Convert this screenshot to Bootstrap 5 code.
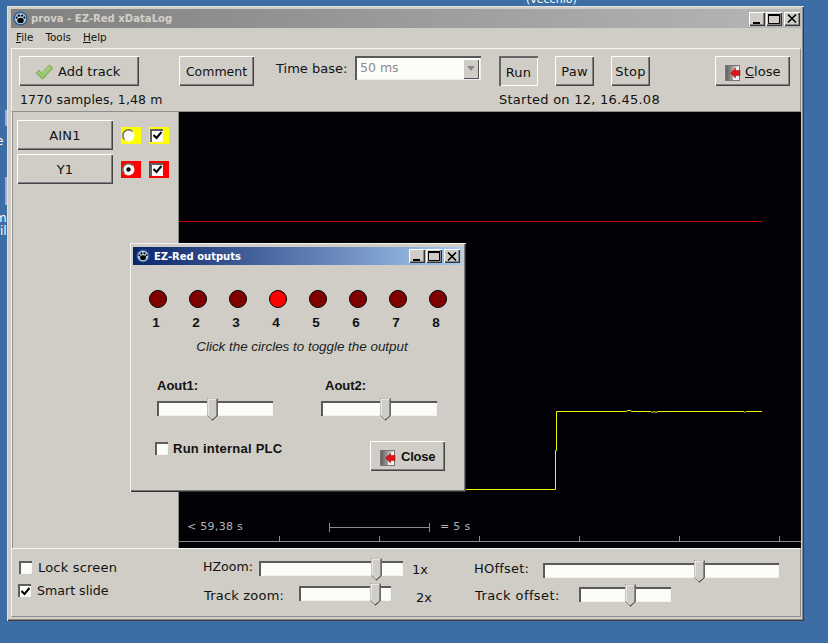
<!DOCTYPE html>
<html lang="en">
<head>
<meta charset="utf-8">
<title>prova - EZ-Red xDataLog</title>
<link href="https://cdn.jsdelivr.net/npm/bootstrap@5.3.0/dist/css/bootstrap.min.css" rel="stylesheet">
<style>
html,body{margin:0;height:100%;overflow:hidden}
body{background:#3c6ea5;font-family:"DejaVu Sans",sans-serif;font-size:13px;color:#111}
.desk{position:relative;width:828px;height:643px;overflow:hidden;background:#3c6ea5}
.stray{position:absolute;color:#fff;font-size:12px;line-height:12px;white-space:nowrap}
.sliver{position:absolute;left:5px;width:2px;background:#a9a6d8}
.surface{background-color:#cfcdc5;background-image:repeating-conic-gradient(#d3d1c9 0 25%,#cbc9c1 0 50%);background-size:2px 2px}
.win{position:absolute;left:7px;top:6px;width:797px;height:615px;padding:3px 3px 3px 4px;box-shadow:inset 1px 1px 0 #e4e2dc,inset -1px -1px 0 #3c3c3c,inset -2px -2px 0 #8a8a8a}
.titlebar{height:19px;padding-left:2px;background:linear-gradient(90deg,#808080,#b6b6b6);color:#d4d0c8;font-weight:700;font-size:10.1px;white-space:nowrap}
.title-name{margin-left:3px}
.capbtns{margin-left:auto;margin-right:1px;gap:1px}
.capbtn{width:16px;height:14px;box-shadow:inset 1px 1px 0 #fff,inset -1px -1px 0 #333,inset -2px -2px 0 #888;display:flex;align-items:center;justify-content:center}
.capbtn+.capbtn+.capbtn{margin-left:1px}
.menubar{height:20px;font-size:10.4px;padding-left:5px;gap:12px;color:#111}
.toolbar{height:64px;width:790px;border-top:1px solid #f5f5f2;border-left:1px solid #f5f5f2;border-bottom:1px solid #8e8e8e;border-right:1px solid #8e8e8e;padding:7px 0 0 7px}
.row-a{height:30px}
.row-b{height:19px;margin-top:4px;white-space:nowrap}
.wbtn{height:30px;padding:2px 0 0;border:0;border-radius:0;font-size:13px;color:#111;font-family:inherit;letter-spacing:.25px;box-shadow:inset 1px 1px 0 #fff,inset -1px -1px 0 #444,inset -2px -2px 0 #808080;display:flex;align-items:center;justify-content:center;background:transparent;flex:none}
.wbtn.pressed{box-shadow:inset 2px 2px 0 #666,inset -1px -1px 0 #fff;padding-top:4px}
.w-add{width:120px;gap:5px;justify-content:flex-start;padding-left:17px;letter-spacing:0}
.w-cmt{width:75px;margin-left:40px;font-size:12.5px;letter-spacing:0}
.tb-lbl{margin-left:22px;width:79px;margin-top:-4px;white-space:nowrap;letter-spacing:0}
.combo{width:126px;height:24px;display:flex;align-items:center;justify-content:space-between;background:#fcfdf9;padding:2px 1px 1px 5px;box-shadow:inset 2px 2px 0 #5a5a5a,inset -1px -1px 0 #eee;color:#8b8b8b;font-size:12.5px}
.combo-arrow{width:16px;height:20px;margin-right:1px;display:flex;align-items:center;justify-content:center;box-shadow:inset 1px 1px 0 #fff,inset -1px -1px 0 #555}
.w-run{width:39px;margin-left:18px}
.w-paw{width:39px;margin-left:17px}
.w-stop{width:39px;margin-left:17px}
.w-close{width:75px;margin-left:65px;gap:4px;justify-content:flex-start;padding-left:10px;letter-spacing:0}
.status-l{width:480px;letter-spacing:.15px;padding-left:1px;font-size:12.5px;line-height:19px}
.status-r{letter-spacing:.25px}
.middle{height:436px;width:790px}
.side{width:168px;flex:none;border-left:1px solid #f5f5f2;border-right:1px solid #8a8a8a;box-shadow:inset 1px 0 0 #8e8e8e;padding:8px 0 0 5px}
.tr{margin-bottom:4px}
.w-track{width:96px}
.swatch{width:20px;height:17px;display:flex;align-items:center;justify-content:flex-start;padding-left:1px}
.sw-radio{margin-left:8px}
.sw-check{margin-left:8px}
.sw-y{background:#ffff00}
.sw-r{background:#ff0000}
.plot{width:622px;height:436px;background:#020206;flex:none}
.plot svg{display:block}
.plot text{font-family:"DejaVu Sans",sans-serif;font-size:11px;fill:#b4b4b4;letter-spacing:.3px}
.chk{width:13px;height:13px;background:#fcfdf9;box-shadow:inset 2px 2px 0 #5e5e5e,inset -1px -1px 0 #f4f4f4;display:flex;align-items:center;justify-content:center;flex:none;padding:1px 0 0 1px}
.rad{width:13px;height:13px;flex:none}
.bottom{height:69px;width:790px;border-top:1px solid #f5f5f2;border-left:1px solid #f5f5f2;border-bottom:1px solid #8e8e8e;border-right:1px solid #8e8e8e;white-space:nowrap;letter-spacing:.2px;line-height:15px}
.bot-a{width:191px;padding:12px 0 0 7px;flex:none}
.chk-row{height:13px;gap:6px}
.chk-row+.chk-row{margin-top:10px;margin-left:-1px}
.smart{letter-spacing:0;font-size:12.6px}
.bot-b{width:271px;flex:none}
.bot-c{flex:none}
.sl-row{display:flex;align-items:center}
.slider{position:relative;height:15px;background:#fcfdf9;box-shadow:inset 2px 2px 0 #5a5a5a,inset -1px -1px 0 #f2f2f2;flex:none}
.thumb{position:absolute;top:-3px;width:11px;height:23px;display:block}
.hz-row{margin-top:10px}
.tz-row{margin-top:6px}
.lbl-hz{width:56px;margin-bottom:4px;letter-spacing:0;font-size:12.6px}
.lbl-tz{width:95px;margin-left:1px;margin-top:4px}
.val-1{margin-left:9px;margin-top:1px;letter-spacing:0}
.val-2{margin-left:25px;margin-top:6px;margin-bottom:-2px;letter-spacing:0}
.hz-s{width:144px}
.tz-s{width:92px}
.bc-1{margin-top:12px}
.bc-2{margin-top:5px}
.lbl-ho{width:69px;margin-bottom:4px}
.lbl-to{width:104px;margin-left:1px;margin-top:3px;letter-spacing:.4px}
.ho-s{width:236px}
.to-s{width:92px}
.dlg{position:absolute;left:130px;top:243px;width:336px;height:249px;padding:4px 4px 0 3px;box-shadow:inset 1px 1px 0 #f2f2ee,inset -1px -1px 0 #333,inset -2px -2px 0 #777;font-family:"Liberation Sans",Arial,sans-serif;font-weight:700;font-size:13px;color:#111}
.dlg-title{height:18px;padding-left:3px;background:linear-gradient(90deg,#0a246a,#a6caf0);color:#fff;font-family:"DejaVu Sans",sans-serif;font-size:10px;white-space:nowrap}
.dlg-title .capbtns{margin-right:2px}
.leds{padding:25px 0 0 5px}
.ledcell{width:40px;text-align:center}
.led{width:18px;height:18px;border-radius:50%;border:1px solid #000;background:#800000;margin:0 auto}
.led.on{background:#ff0000}
.ledn{line-height:14px;margin-top:8px;font-size:13.5px;padding-right:4px}
.hint{font-weight:400;font-style:italic;font-size:13.4px;text-align:center;margin-top:9px;line-height:16px;padding-left:9px;color:#222}
.slgrp{padding:23px 0 0 24px;height:86px}
.sl-d1{width:164px}
.sl-lbl{line-height:16px;margin-bottom:7px}
.aout2{padding-left:4px}
.sl-116{width:116px}
.dlg-bot{padding-left:22px}
.dlg-chk{gap:5px;margin-top:1px;height:13px;letter-spacing:.25px}
.w-dclose{width:75px;margin-left:auto;margin-right:17px;font-weight:700;font-size:13px;font-family:inherit;letter-spacing:-.2px;gap:5px;justify-content:flex-start;padding-left:10px}
</style>
</head>
<body>
<div class="desk">
  <span class="stray" style="left:526px;top:-6px;font-size:11px">(vecchio)</span>
  <span class="stray" style="left:-4px;top:135px">e</span>
  <span class="stray" style="left:-5px;top:212px">m</span>
  <span class="stray" style="left:-5px;top:225px">ril</span>
  <span class="sliver" style="top:110px;height:16px"></span>
  <span class="sliver" style="top:177px;height:28px"></span>

  <div class="win surface">
    <div class="titlebar d-flex align-items-center">
      <svg width="15" height="15" viewBox="0 0 15 15"><circle cx="7.5" cy="7.5" r="7" fill="#2f5f96"/><circle cx="7.5" cy="7.5" r="5.6" fill="#b9d3ea"/><ellipse cx="7.5" cy="9.4" rx="3.2" ry="2.6" fill="#000"/><circle cx="3.6" cy="6.6" r="1.1" fill="#000"/><circle cx="5.9" cy="4.6" r="1.2" fill="#000"/><circle cx="9.1" cy="4.6" r="1.2" fill="#000"/><circle cx="11.4" cy="6.6" r="1.1" fill="#000"/></svg>
      <span class="title-name">prova - EZ-Red xDataLog</span>
      <div class="capbtns d-flex">
        <span class="capbtn surface"><svg width="10" height="10"><rect x="1" y="8" width="7" height="2" fill="#000"/></svg></span>
        <span class="capbtn surface"><svg width="12" height="10"><path d="M.5 1.5h11v8H.5z" fill="none" stroke="#000"/><rect y="0" width="12" height="2" fill="#000"/></svg></span>
        <span class="capbtn surface"><svg width="10" height="9"><path d="M1 .5l8 8M9 .5l-8 8" stroke="#000" stroke-width="1.6"/></svg></span>
      </div>
    </div>
    <div class="menubar d-flex align-items-center">
      <span><u>F</u>ile</span><span>Tools</span><span><u>H</u>elp</span>
    </div>
    <div class="toolbar">
      <div class="row-a d-flex align-items-center">
        <button class="btn wbtn w-add" type="button">
          <svg width="17" height="16" viewBox="0 0 17 16"><path d="M0 9l3-3 3 3 7-8 4 3-10 11h-1z" fill="#8dbb62" stroke="#79a851" stroke-width=".7"/><path d="M2.5 8l4 4.5 8-9M5 7.500l2 2 6-7" fill="none" stroke="#bcdc98" stroke-width="1"/></svg>
          <span>Add track</span>
        </button>
        <button class="btn wbtn w-cmt" type="button">Comment</button>
        <span class="tb-lbl">Time base:</span>
        <div class="combo align-self-start"><span>50 ms</span><span class="combo-arrow surface"><svg width="10" height="6"><path d="M1 0h8L5 5z" fill="#8a8a8a"/></svg></span></div>
        <button class="btn wbtn w-run pressed" type="button">Run</button>
        <button class="btn wbtn w-paw" type="button">Paw</button>
        <button class="btn wbtn w-stop" type="button">Stop</button>
        <button class="btn wbtn w-close" type="button">
          <svg width="16" height="17" viewBox="0 0 16 17"><defs><linearGradient id="dg"><stop offset="0" stop-color="#5a5a5a"/><stop offset="1" stop-color="#e2e2e2"/></linearGradient></defs><rect x=".5" y="1.500" width="14" height="15" fill="url(#dg)" stroke="#777"/><path d="M8 5l6-3v14H8z" fill="#f0f0f0"/><path d="M5.500 9l5-5v2.500h4.500v5h-4.500V14z" fill="#d8141c" stroke="#a00" stroke-width=".5"/></svg>
          <span><u>C</u>lose</span>
        </button>
      </div>
      <div class="row-b d-flex">
        <span class="status-l">1770 samples, 1,48 m</span>
        <span class="status-r">Started on 12, 16.45.08</span>
      </div>
    </div>
    <div class="middle d-flex">
      <div class="side">
        <div class="tr d-flex align-items-center">
          <button class="btn wbtn w-track" type="button">AIN1</button>
          <span class="swatch sw-y sw-radio"><svg class="rad" viewBox="0 0 13 13"><circle cx="6.500" cy="6.500" r="6" fill="#fcfdf9"/><path d="M10.500 2.500A5.500 5.500 0 0 0 2.500 10.500" fill="none" stroke="#666" stroke-width="1.500"/></svg></span>
          <span class="swatch sw-y sw-check"><span class="chk"><svg width="9" height="9"><path d="M.5 4l3 3 5-6" fill="none" stroke="#000" stroke-width="2"/></svg></span></span>
        </div>
        <div class="tr d-flex align-items-center">
          <button class="btn wbtn w-track" type="button">Y1</button>
          <span class="swatch sw-r sw-radio"><svg class="rad" viewBox="0 0 13 13"><circle cx="6.500" cy="6.500" r="6" fill="#fcfdf9"/><path d="M10.500 2.500A5.500 5.500 0 0 0 2.500 10.500" fill="none" stroke="#666" stroke-width="1.500"/><circle cx="6.500" cy="6.500" r="2.200" fill="#000"/></svg></span>
          <span class="swatch sw-r sw-check"><span class="chk"><svg width="9" height="9"><path d="M.5 4l3 3 5-6" fill="none" stroke="#000" stroke-width="2"/></svg></span></span>
        </div>
      </div>
      <div class="plot">
        <svg width="622" height="436" viewBox="0 0 622 436">
          <path d="M0 109.5H583" stroke="#c80000" fill="none"/>
          <path d="M0 377.5H376.5V338.5H377.5V299.5H447L449 298.5 451 298.5 453 299.5H472L473 300.5 475 299.5 477 300.5 479 299.5H565L566 300.5 567 299.5H583" stroke="#f4f400" fill="none"/>
          <path d="M0 429.5H622M100.5 424v5M200.5 424v5M300.5 424v5M400.5 424v5M500.5 424v5M600.5 424v5" stroke="#8a8a8a" fill="none"/>
          <path d="M150 415.5H250M150.5 411v9M250.5 411v9" stroke="#8a8a8a" fill="none"/>
          <text x="8" y="418">&lt; 59,38 s</text>
          <text x="261" y="418">= 5 s</text>
        </svg>
      </div>
    </div>
    <div class="bottom surface d-flex">
      <div class="bot-a">
        <div class="chk-row d-flex align-items-center"><span class="chk"></span><span>Lock screen</span></div>
        <div class="chk-row d-flex align-items-center"><span class="chk"><svg width="9" height="9"><path d="M.5 4l3 3 5-6" fill="none" stroke="#000" stroke-width="2"/></svg></span><span class="smart">Smart slide</span></div>
      </div>
      <div class="bot-b">
        <div class="sl-row hz-row"><span class="lbl-hz">HZoom:</span>
          <div class="slider hz-s"><svg class="thumb" style="left:112px" viewBox="0 0 11 23"><path d="M.5.5h10v17l-5 5-5-5z" fill="#cfcdc5" stroke="#888"/><path d="M1 1v16M1 1h9" stroke="#fff"/><path d="M10 1v17l-5 4" stroke="#444" fill="none"/></svg></div>
          <span class="val-1">1x</span></div>
        <div class="sl-row tz-row"><span class="lbl-tz">Track zoom:</span>
          <div class="slider tz-s"><svg class="thumb" style="left:71px" viewBox="0 0 11 23"><path d="M.5.5h10v17l-5 5-5-5z" fill="#cfcdc5" stroke="#888"/><path d="M1 1v16M1 1h9" stroke="#fff"/><path d="M10 1v17l-5 4" stroke="#444" fill="none"/></svg></div>
          <span class="val-2">2x</span></div>
      </div>
      <div class="bot-c">
        <div class="sl-row bc-1"><span class="lbl-ho">HOffset:</span>
          <div class="slider ho-s"><svg class="thumb" style="left:151px" viewBox="0 0 11 23"><path d="M.5.5h10v17l-5 5-5-5z" fill="#cfcdc5" stroke="#888"/><path d="M1 1v16M1 1h9" stroke="#fff"/><path d="M10 1v17l-5 4" stroke="#444" fill="none"/></svg></div></div>
        <div class="sl-row bc-2"><span class="lbl-to">Track offset:</span>
          <div class="slider to-s"><svg class="thumb" style="left:46px" viewBox="0 0 11 23"><path d="M.5.5h10v17l-5 5-5-5z" fill="#cfcdc5" stroke="#888"/><path d="M1 1v16M1 1h9" stroke="#fff"/><path d="M10 1v17l-5 4" stroke="#444" fill="none"/></svg></div></div>
      </div>
    </div>
  </div>

  <div class="dlg surface">
    <div class="dlg-title d-flex align-items-center fw-bold">
      <svg width="14" height="14" viewBox="0 0 15 15"><circle cx="7.5" cy="7.5" r="7" fill="#2f5f96"/><circle cx="7.5" cy="7.5" r="5.6" fill="#b9d3ea"/><ellipse cx="7.5" cy="9.4" rx="3.2" ry="2.6" fill="#000"/><circle cx="3.6" cy="6.6" r="1.1" fill="#000"/><circle cx="5.9" cy="4.6" r="1.2" fill="#000"/><circle cx="9.1" cy="4.6" r="1.2" fill="#000"/><circle cx="11.4" cy="6.6" r="1.1" fill="#000"/></svg>
      <span class="ms-1">EZ-Red outputs</span>
      <div class="capbtns d-flex">
        <span class="capbtn surface"><svg width="10" height="10"><rect x="1" y="8" width="7" height="2" fill="#000"/></svg></span>
        <span class="capbtn surface"><svg width="12" height="10"><path d="M.5 1.5h11v8H.5z" fill="none" stroke="#000"/><rect y="0" width="12" height="2" fill="#000"/></svg></span>
        <span class="capbtn surface"><svg width="10" height="9"><path d="M1 .5l8 8M9 .5l-8 8" stroke="#000" stroke-width="1.6"/></svg></span>
      </div>
    </div>
    <div class="leds d-flex">
      <div class="ledcell"><div class="led"></div><div class="ledn">1</div></div>
      <div class="ledcell"><div class="led"></div><div class="ledn">2</div></div>
      <div class="ledcell"><div class="led"></div><div class="ledn">3</div></div>
      <div class="ledcell"><div class="led on"></div><div class="ledn">4</div></div>
      <div class="ledcell"><div class="led"></div><div class="ledn">5</div></div>
      <div class="ledcell"><div class="led"></div><div class="ledn">6</div></div>
      <div class="ledcell"><div class="led"></div><div class="ledn">7</div></div>
      <div class="ledcell"><div class="led"></div><div class="ledn">8</div></div>
    </div>
    <div class="hint">Click the circles to toggle the output</div>
    <div class="slgrp d-flex">
      <div class="sl-d1"><div class="sl-lbl">Aout1:</div>
        <div class="slider sl-116"><svg class="thumb" style="left:50px" viewBox="0 0 11 23"><path d="M.5.5h10v17l-5 5-5-5z" fill="#cfcdc5" stroke="#888"/><path d="M1 1v16M1 1h9" stroke="#fff"/><path d="M10 1v17l-5 4" stroke="#444" fill="none"/></svg></div></div>
      <div><div class="sl-lbl aout2">Aout2:</div>
        <div class="slider sl-116"><svg class="thumb" style="left:59px" viewBox="0 0 11 23"><path d="M.5.5h10v17l-5 5-5-5z" fill="#cfcdc5" stroke="#888"/><path d="M1 1v16M1 1h9" stroke="#fff"/><path d="M10 1v17l-5 4" stroke="#444" fill="none"/></svg></div></div>
    </div>
    <div class="dlg-bot d-flex align-items-start">
      <div class="dlg-chk d-flex align-items-center"><span class="chk"></span><span>Run internal PLC</span></div>
      <button class="btn wbtn w-dclose" type="button">
        <svg width="16" height="17" viewBox="0 0 16 17"><rect x=".5" y="1.500" width="14" height="15" fill="url(#dg)" stroke="#777"/><path d="M8 5l6-3v14H8z" fill="#f0f0f0"/><path d="M5.500 9l5-5v2.500h4.500v5h-4.500V14z" fill="#d8141c" stroke="#a00" stroke-width=".5"/></svg>
        <span>Close</span>
      </button>
    </div>
  </div>
</div>
<script src="https://cdn.jsdelivr.net/npm/bootstrap@5.3.0/dist/js/bootstrap.bundle.min.js"></script>
</body>
</html>
